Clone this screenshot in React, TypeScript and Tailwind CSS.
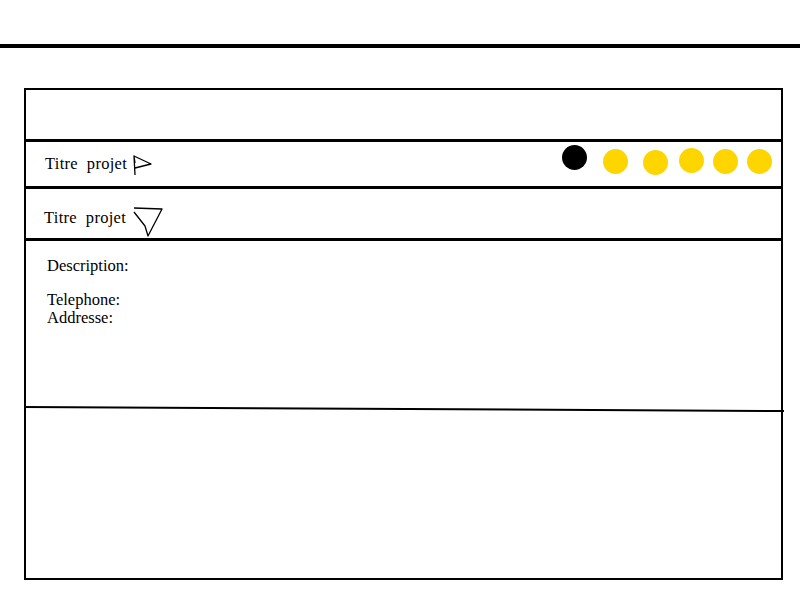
import React from "react";

const yellowDots = [
    { ml: "ml-[16px]", mt: "mt-[7px]" },
    { ml: "ml-[15px]", mt: "mt-[8px]" },
    { ml: "ml-[11px]", mt: "mt-[6px]" },
    { ml: "ml-[9px]", mt: "mt-[7px]" },
    { ml: "ml-[9px]", mt: "mt-[7px]" },
];

const RightArrow = () => (
    <svg width="22" height="24" viewBox="0 0 22 24" className="ml-[5px] mt-[1px]">
        <path
            d="M2 3 L3 22 M3 10 L2 3 L19 11 L3 15"
            fill="none"
            stroke="black"
            strokeWidth="1.3"
            strokeLinejoin="round"
        />
    </svg>
);

const DownArrow = () => (
    <svg width="32" height="32" viewBox="0 0 32 32" className="ml-[6px] mt-[17px]">
        <path
            d="M2 2 L30 3 L16 30 L13 20 L2 6"
            fill="none"
            stroke="black"
            strokeWidth="1.3"
            strokeLinejoin="round"
        />
    </svg>
);

export default function App() {
    return (
        <div className="w-[800px] h-[600px] bg-white font-['Liberation_Serif',serif] text-black">
            <div className="h-[44px]" />
            <div className="h-[4px] bg-black" />
            <div className="h-[40px]" />
            <div className="ml-[24px] w-[759px] h-[492px] border-2 border-black flex flex-col">
                <div className="h-[52px] shrink-0 border-b-[3px] border-black" />
                <div className="h-[47px] shrink-0 border-b-[3px] border-black flex items-center pl-[19px] pr-[9px]">
                    <span className="text-[16.5px] tracking-[0.3px]">Titre&nbsp; projet</span>
                    <RightArrow />
                    <div className="flex-1" />
                    <div className="flex items-start self-start">
                        <div className="w-[25px] h-[25px] rounded-full bg-black mt-[3px]" />
                        {yellowDots.map((d, i) => (
                            <div
                                key={i}
                                className={`w-[25px] h-[25px] rounded-full bg-[#FFD500] ${d.ml} ${d.mt}`}
                            />
                        ))}
                    </div>
                </div>
                <div className="h-[52px] shrink-0 border-b-[3px] border-black flex items-start pl-[18px]">
                    <span className="text-[16.5px] tracking-[0.3px] mt-[17px]">Titre&nbsp; projet</span>
                    <DownArrow />
                </div>
                <div className="h-[164px] shrink-0 pl-[21px] pt-[16px] text-[16.5px] leading-[18px]">
                    <p>Description:</p>
                    <p className="mt-[16px]">Telephone:</p>
                    <p>Addresse:</p>
                </div>
                <svg
                    width="760"
                    height="8"
                    viewBox="0 0 760 8"
                    preserveAspectRatio="none"
                    className="-ml-[2px] block shrink-0 w-[760px] h-[8px] max-w-none"
                >
                    <line x1="0" y1="2" x2="760" y2="6" stroke="black" strokeWidth="2" />
                </svg>
                <div className="flex-1" />
            </div>
        </div>
    );
}
